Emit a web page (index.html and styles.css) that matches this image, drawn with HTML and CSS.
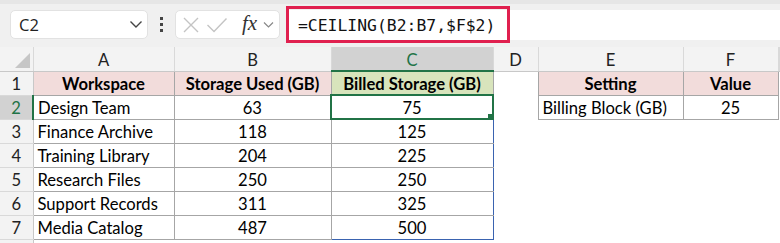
FILE: index.html
```html
<!DOCTYPE html>
<html lang="en">
<head>
  <meta charset="UTF-8">
  <title>Billing Storage</title>
  <link rel="stylesheet" href="styles.css">
</head>
<body>
  <div class="toolbar">
    <div class="namebox">
      <span>C2</span>
      <svg class="chev" width="14" height="9" viewBox="0 0 14 9"><path d="M1.5 1.5 L7 7 L12.5 1.5" fill="none" stroke="#444" stroke-width="1.4"/></svg>
    </div>
    <div class="grip"><i></i><i></i><i></i></div>
    <div class="fxbox">
      <svg width="18" height="18" viewBox="0 0 18 18"><path d="M2 2 L16 16 M16 2 L2 16" stroke="#c4c4c4" stroke-width="1.4"/></svg>
      <svg width="22" height="18" viewBox="0 0 22 18"><path d="M1.5 9 L8 15.5 L20.5 2.5" fill="none" stroke="#c4c4c4" stroke-width="1.4"/></svg>
      <span class="fx">fx</span>
      <svg width="11" height="8" viewBox="0 0 11 8"><path d="M1 1.5 L5.5 6 L10 1.5" fill="none" stroke="#888" stroke-width="1.2"/></svg>
    </div>
    <div class="formula">
      <span>=CEILING(B2:B7,$F$2)</span>
      <div class="highlight"></div>
    </div>
  </div>

  <table class="sheet">
    <colgroup>
      <col style="width:33px"><col style="width:141px"><col style="width:157px"><col style="width:162px">
      <col style="width:45px"><col style="width:145px"><col style="width:95px"><col>
    </colgroup>
    <tr class="colhead">
      <th class="corner"><span class="tri"></span></th>
      <th>A</th><th>B</th><th class="sel">C</th><th>D</th><th>E</th><th>F</th><th></th>
    </tr>
    <tr>
      <th class="rowhead">1</th>
      <td class="hd pink">Workspace</td>
      <td class="hd pink">Storage Used (GB)</td>
      <td class="hd green">Billed Storage (GB)</td>
      <td class="blank"></td>
      <td class="hd pink">Setting</td>
      <td class="hd pink">Value</td>
      <td class="blank"></td>
    </tr>
    <tr>
      <th class="rowhead sel">2</th>
      <td class="box">Design Team</td>
      <td class="box num">63</td>
      <td class="box num active">75<i class="handle"></i></td>
      <td class="blank"></td>
      <td class="box">Billing Block (GB)</td>
      <td class="box num">25</td>
      <td class="blank"></td>
    </tr>
    <tr>
      <th class="rowhead">3</th>
      <td class="box">Finance Archive</td>
      <td class="box num">118</td>
      <td class="box num out">125</td>
      <td class="blank" colspan="4"></td>
    </tr>
    <tr>
      <th class="rowhead">4</th>
      <td class="box">Training Library</td>
      <td class="box num">204</td>
      <td class="box num out">225</td>
      <td class="blank" colspan="4"></td>
    </tr>
    <tr>
      <th class="rowhead">5</th>
      <td class="box">Research Files</td>
      <td class="box num">250</td>
      <td class="box num out">250</td>
      <td class="blank" colspan="4"></td>
    </tr>
    <tr>
      <th class="rowhead">6</th>
      <td class="box">Support Records</td>
      <td class="box num">311</td>
      <td class="box num out">325</td>
      <td class="blank" colspan="4"></td>
    </tr>
    <tr>
      <th class="rowhead">7</th>
      <td class="box">Media Catalog</td>
      <td class="box num">487</td>
      <td class="box num out last">500</td>
      <td class="blank" colspan="4"></td>
    </tr>
    <tr>
      <th class="rowhead"></th>
      <td class="blank" colspan="7"></td>
    </tr>
  </table>
</body>
</html>
```

FILE: styles.css
```css
:root {
  --bar: #f0f0f0;
  --head: #f3f3f3;
  --headline: #d9d9d9;
  --cell: #a6a6a6;
  --excel: #217346;
  --range: #3a63b0;
  --pink: #f2dcdb;
  --green: #d8e4bc;
}

* {
  box-sizing: border-box;
}

body {
  margin: 0;
  background: #fff;
  font-family: Lato, 'Open Sans', sans-serif;
  color: #000;
  overflow: hidden;
}

/* formula bar */
.toolbar {
  height: 47px;
  background: var(--bar);
  border-top: 4px solid #e6e6e6;
  display: flex;
  align-items: flex-start;
  padding-top: 6px;
  padding-left: 10px;
}

.namebox {
  width: 138px;
  height: 29px;
  background: #fff;
  border: 1px solid #e2e2e2;
  border-radius: 5px;
  display: flex;
  align-items: center;
  justify-content: space-between;
  padding: 0 4px 0 8px;
  font-family: 'Open Sans', sans-serif;
  font-size: 16.5px;
  color: #222;
}

.grip {
  width: 27px;
  height: 29px;
  display: flex;
  flex-direction: column;
  align-items: center;
  justify-content: center;
  gap: 3px;
}

.grip i {
  width: 3px;
  height: 3px;
  background: #444;
}

.fxbox {
  width: 105px;
  height: 29px;
  background: #fff;
  border: 1px solid #e2e2e2;
  border-radius: 5px;
  display: flex;
  align-items: center;
  gap: 6px;
  padding-left: 6px;
}

.fx {
  font-family: 'Liberation Serif', serif;
  font-style: italic;
  font-size: 21px;
  color: #333;
  margin-left: 8px;
  margin-top: -2px;
}

.formula {
  position: relative;
  flex: 1;
  height: 30px;
  margin-left: 7px;
  background: #fff;
  display: flex;
  align-items: center;
  padding-left: 11px;
  font-family: 'DejaVu Sans Mono', monospace;
  font-size: 16.4px;
  color: #111;
}

.highlight {
  position: absolute;
  left: -1px;
  top: -4px;
  width: 224px;
  height: 37px;
  border: 3px solid #e0204f;
}

/* grid */
.sheet {
  border-collapse: collapse;
  table-layout: fixed;
  width: 780px;
  font-size: 16.6px;
}

.sheet th,
.sheet td {
  height: 24px;
  padding: 2px 4px 0;
  white-space: nowrap;
  overflow: hidden;
  line-height: 20px;
}

.colhead th {
  background: var(--head);
  font-weight: normal;
  color: #222;
  border-right: 1px solid var(--headline);
  border-bottom: 1px solid #c8c8c8;
  text-align: center;
}

.colhead th.sel {
  background: #d2d2d2;
  color: var(--excel);
  border-bottom: 2px solid var(--excel);
}

.corner {
  position: relative;
}

.tri {
  position: absolute;
  right: 3px;
  bottom: 3px;
  width: 0;
  height: 0;
  border-left: 15px solid transparent;
  border-bottom: 15px solid #c6c6c6;
}

.rowhead {
  background: var(--head);
  font-weight: normal;
  color: #222;
  text-align: center;
  border-bottom: 1px solid var(--headline);
  border-right: 1px solid #c8c8c8;
}

.rowhead.sel {
  background: #d2d2d2;
  color: var(--excel);
  border-right: 2px solid var(--excel);
}

.hd {
  font-weight: bold;
  text-align: center;
  border: 1px solid var(--cell);
}

.pink {
  background: var(--pink);
}

.green {
  background: var(--green);
  border-top: 2px solid var(--excel);
}

.box {
  border: 1px solid var(--cell);
}

.num {
  text-align: center;
}

.out {
  border-left: 1px solid var(--range);
  border-right: 1px solid var(--range);
}

.out.last {
  border-bottom: 1px solid var(--range);
}

.active {
  position: relative;
  border: 2px solid var(--excel);
}

.handle {
  position: absolute;
  right: -1px;
  bottom: -1px;
  width: 6px;
  height: 6px;
  background: var(--excel);
  border: 1px solid #fff;
}

.blank {
  border: none;
}
```
